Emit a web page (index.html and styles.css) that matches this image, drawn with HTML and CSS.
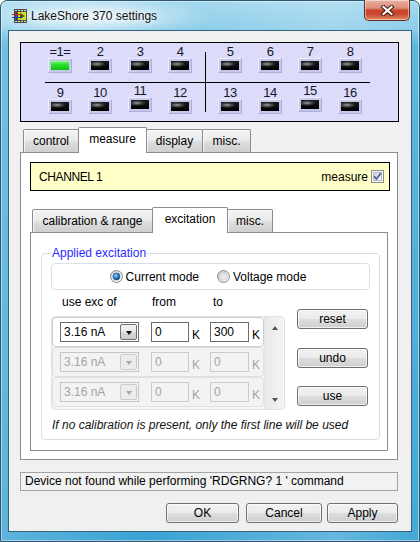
FILE: index.html
```html
<!DOCTYPE html>
<html>
<head>
<meta charset="utf-8">
<title>LakeShore 370 settings</title>
<link rel="stylesheet" href="styles.css">
</head>
<body>
<div class="window">
  <div class="titlebar">
    <svg class="appicon" width="16" height="16" viewBox="0 0 16 16">
      <rect x="2" y="1" width="13" height="14" fill="#4a4a4a"/>
      <rect x="3" y="2" width="2" height="1" fill="#d8d8d8"/><rect x="6" y="2" width="2" height="1" fill="#d8d8d8"/>
      <rect x="9" y="2" width="2" height="1" fill="#d8d8d8"/><rect x="12" y="2" width="2" height="1" fill="#d8d8d8"/>
      <rect x="3" y="13" width="2" height="1" fill="#d8d8d8"/><rect x="6" y="13" width="2" height="1" fill="#d8d8d8"/>
      <rect x="9" y="13" width="2" height="1" fill="#d8d8d8"/><rect x="12" y="13" width="2" height="1" fill="#d8d8d8"/>
      <rect x="6" y="4" width="8" height="8" fill="#d4e21c"/>
      <path d="M8 5 L13 8 L8 11 Z" fill="#3d5a0c"/>
      <rect x="0" y="6" width="10" height="1" fill="#e01818"/>
      <rect x="0" y="9" width="10" height="1" fill="#1c3ce0"/>
    </svg>
    <span class="title">LakeShore 370 settings</span>
    <div class="close">
      <svg width="15" height="11" viewBox="0 0 15 11">
        <path d="M3.5 2 L11.5 9 M11.5 2 L3.5 9" stroke="#4a1a12" stroke-width="4.2" stroke-linecap="square"/>
        <path d="M3.5 2 L11.5 9 M11.5 2 L3.5 9" stroke="#ffffff" stroke-width="2.2" stroke-linecap="square"/>
      </svg>
    </div>
  </div>

  <div class="client">
    <div class="chan">
      <div class="vline"></div>
      <div class="hline"></div>

      <div class="cell r1 k1"><span class="num">=1=</span><span class="led on"><i></i></span></div>
      <div class="cell r1 k2"><span class="num">2</span><span class="led"><i></i></span></div>
      <div class="cell r1 k3"><span class="num">3</span><span class="led"><i></i></span></div>
      <div class="cell r1 k4"><span class="num">4</span><span class="led"><i></i></span></div>
      <div class="cell r1 k5"><span class="num">5</span><span class="led"><i></i></span></div>
      <div class="cell r1 k6"><span class="num">6</span><span class="led"><i></i></span></div>
      <div class="cell r1 k7"><span class="num">7</span><span class="led"><i></i></span></div>
      <div class="cell r1 k8"><span class="num">8</span><span class="led"><i></i></span></div>

      <div class="cell r2 k1"><span class="num">9</span><span class="led"><i></i></span></div>
      <div class="cell r2 k2"><span class="num">10</span><span class="led"><i></i></span></div>
      <div class="cell r2 k3 up"><span class="num">11</span><span class="led"><i></i></span></div>
      <div class="cell r2 k4"><span class="num">12</span><span class="led"><i></i></span></div>
      <div class="cell r2 k5"><span class="num">13</span><span class="led"><i></i></span></div>
      <div class="cell r2 k6"><span class="num">14</span><span class="led"><i></i></span></div>
      <div class="cell r2 k7 up"><span class="num">15</span><span class="led"><i></i></span></div>
      <div class="cell r2 k8"><span class="num">16</span><span class="led"><i></i></span></div>
    </div>

    <div class="tabs">
      <div class="tabbar">
        <div class="tab w-control">control</div>
        <div class="tab sel w-measure">measure</div>
        <div class="tab w-display">display</div>
        <div class="tab w-misc">misc.</div>
      </div>
      <div class="panel">
        <div class="chbar">
          <span class="chname">CHANNEL 1</span>
          <span class="meas">measure</span>
          <svg class="check" width="13" height="13" viewBox="0 0 13 13">
            <defs>
              <linearGradient id="cbg" x1="0" y1="0" x2="1" y2="1">
                <stop offset="0" stop-color="#cfd3da"/>
                <stop offset="1" stop-color="#f7f7f9"/>
              </linearGradient>
            </defs>
            <rect x="0.5" y="0.5" width="12" height="12" fill="#f6f6f6" stroke="#8e8f8f"/>
            <rect x="2.5" y="2.5" width="8" height="8" fill="url(#cbg)" stroke="#b7bcc6"/>
            <path d="M3.2 6.4 L5.4 9 L9.8 3.2" fill="none" stroke="#4a5c96" stroke-width="1.7"/>
          </svg>
        </div>

        <div class="subtabs">
          <div class="tabbar sub">
            <div class="tab w-calib">calibration &amp; range</div>
            <div class="tab sel w-exc">excitation</div>
            <div class="tab w-misc2">misc.</div>
          </div>
          <div class="subpanel">
            <fieldset class="group">
              <legend>Applied excitation</legend>
              <div class="modes">
                <label class="radio">
                  <svg width="13" height="13" viewBox="0 0 13 13">
                    <defs>
                      <linearGradient id="rg1" x1="0" y1="0" x2="1" y2="1">
                        <stop offset="0" stop-color="#c9ccd2"/>
                        <stop offset="1" stop-color="#f6f6f6"/>
                      </linearGradient>
                      <radialGradient id="rb1" cx="0.4" cy="0.35" r="0.7">
                        <stop offset="0" stop-color="#a6e2ff"/>
                        <stop offset="0.45" stop-color="#2f8ad6"/>
                        <stop offset="1" stop-color="#0b3f7a"/>
                      </radialGradient>
                    </defs>
                    <circle cx="6.5" cy="6.5" r="6" fill="url(#rg1)" stroke="#8a8d93"/>
                    <circle cx="6.5" cy="6.5" r="3.4" fill="url(#rb1)" stroke="#19467a" stroke-width="0.6"/>
                  </svg>
                  <span>Current mode</span>
                </label>
                <label class="radio">
                  <svg width="13" height="13" viewBox="0 0 13 13">
                    <defs>
                      <linearGradient id="rg2" x1="0" y1="0" x2="1" y2="1">
                        <stop offset="0" stop-color="#c3c6cc"/>
                        <stop offset="1" stop-color="#f8f8f8"/>
                      </linearGradient>
                    </defs>
                    <circle cx="6.5" cy="6.5" r="6" fill="url(#rg2)" stroke="#8a8d93"/>
                    <circle cx="6.5" cy="6.5" r="3.6" fill="#e6e7ea" stroke="#c5c8ce" stroke-width="0.6"/>
                  </svg>
                  <span>Voltage mode</span>
                </label>
              </div>

              <div class="exc">
                <div class="exc-left">
                  <div class="heads">
                    <span class="h1">use exc of</span>
                    <span class="h2">from</span>
                    <span class="h3">to</span>
                  </div>
                  <div class="table">
                    <div class="rows">
                      <div class="row">
                        <div class="combo"><span class="ctext">3.16 nA</span><span class="cbtn"><i></i></span></div>
                        <div class="inp i1">0</div><span class="unit">K</span>
                        <div class="inp i2">300</div><span class="unit">K</span>
                      </div>
                      <div class="row dis">
                        <div class="combo"><span class="ctext">3.16 nA</span><span class="cbtn"><i></i></span></div>
                        <div class="inp i1">0</div><span class="unit">K</span>
                        <div class="inp i2">0</div><span class="unit">K</span>
                      </div>
                      <div class="row dis">
                        <div class="combo"><span class="ctext">3.16 nA</span><span class="cbtn"><i></i></span></div>
                        <div class="inp i1">0</div><span class="unit">K</span>
                        <div class="inp i2">0</div><span class="unit">K</span>
                      </div>
                    </div>
                    <div class="scroll"><span class="arr-up"></span><span class="arr-down"></span></div>
                  </div>
                </div>
                <div class="sidebtns">
                  <button class="btn">reset</button>
                  <button class="btn b-undo">undo</button>
                  <button class="btn b-use">use</button>
                </div>
              </div>
              <p class="note">If no calibration is present, only the first line will be used</p>
            </fieldset>
          </div>
        </div>
      </div>
    </div>

    <div class="status">Device not found while performing 'RDGRNG? 1 ' command</div>

    <div class="actions">
      <button class="btn b-ok">OK</button>
      <button class="btn b-cancel">Cancel</button>
      <button class="btn b-apply">Apply</button>
    </div>
  </div>
</div>
</body>
</html>
```

FILE: styles.css
```css
* { box-sizing: border-box; }
html, body { margin: 0; padding: 0; }
body {
  width: 420px;
  height: 542px;
  overflow: hidden;
  background: #ffffff;
  font-family: "Liberation Sans", Arial, sans-serif;
  font-size: 12px;
  color: #000;
}

/* ---------- window frame ---------- */
.window {
  width: 420px;
  height: 542px;
  display: flex;
  flex-direction: column;
  padding: 0 7px 9px 7px;
  border: 1px solid #2d5670;
  border-radius: 7px 7px 0 0;
  background:
    radial-gradient(ellipse 120px 22px at 92px 16px, rgba(255,255,255,0.85), rgba(255,255,255,0)),
    linear-gradient(90deg, rgba(255,255,255,0.18), rgba(255,255,255,0) 35%, rgba(255,255,255,0.22) 80%, rgba(255,255,255,0.05)),
    linear-gradient(180deg, #9fd6ee 0, #86cbe8 28px, #52b3dc 44px, #3aa3d4 100%);
  box-shadow: inset 0 0 0 1px rgba(255,255,255,0.45);
}
.titlebar {
  flex: none;
  height: 29px;
  display: flex;
  align-items: flex-start;
}
.appicon { margin: 7px 0 0 4px; flex: none; }
.title {
  margin: 7px 0 0 3px;
  line-height: 16px;
  font-size: 12px;
  color: #111;
  text-shadow: 0 0 6px #fff, 0 0 10px #fff;
}
.close {
  margin: -1px 2px 0 auto;
  width: 46px;
  height: 21px;
  border: 1px solid #6a2a20;
  border-top: 0;
  border-radius: 0 0 5px 5px;
  background: linear-gradient(180deg, #eab1a3 0, #dd8d7a 40%, #c5452d 52%, #c9472e 70%, #e08a66 100%);
  box-shadow: inset 0 0 0 1px rgba(255,255,255,0.45);
  display: flex;
  align-items: center;
  justify-content: center;
}

.client {
  flex: 1;
  background: #f0f0f0;
  border: 1px solid #34627c;
  padding: 11px 0 0 11px;
  display: flex;
  flex-direction: column;
}

/* ---------- channel panel ---------- */
.chan {
  flex: none;
  width: 379px;
  height: 80px;
  border: 1px solid #000;
  background: #dcdcfa;
  padding-top: 2px;
  display: grid;
  grid-template-columns: 19px repeat(4, 40px) 5px 1px 4px repeat(4, 40px) 1fr;
  grid-template-rows: 28px 9px 1px 3px 28px;
}
.vline { grid-column: 7; grid-row: 1 / 6; background: #000; margin: 7px 0 2px 0; }
.hline { grid-column: 2 / 13; grid-row: 3; background: #000; margin-left: 5px; }
.cell { display: flex; flex-direction: column; align-items: center; }
.r1 { grid-row: 1; }
.r2 { grid-row: 5; }
.k1 { grid-column: 2; } .k2 { grid-column: 3; } .k3 { grid-column: 4; } .k4 { grid-column: 5; }
.k5 { grid-column: 9; } .k6 { grid-column: 10; } .k7 { grid-column: 11; } .k8 { grid-column: 12; }
.up { margin-top: -2px; }
.num {
  height: 13px;
  line-height: 13px;
  font-size: 13px;
  letter-spacing: -0.5px;
  color: #161628;
}
.led {
  display: block;
  width: 24px;
  height: 15px;
  padding: 2px 2px;
  background: #c8c8ee;
  border: 1px solid;
  border-color: #ececff #aeaed8 #aeaed8 #ececff;
}
.led i {
  display: block;
  width: 100%;
  height: 100%;
  background: radial-gradient(ellipse 9px 3px at 6px 3px, #a0a0a0 0, #3a3a3a 60%, rgba(0,0,0,0) 100%), linear-gradient(#1a1a1a, #000);
}
.led.on i {
  background: linear-gradient(180deg, #8cff8c 0, #2ee02e 35%, #10c010 100%);
}

/* ---------- tabs ---------- */
.tabs { flex: none; width: 378px; margin-top: 5px; display: flex; flex-direction: column; }
.tabbar { display: flex; align-items: flex-end; height: 25px; padding-left: 3px; }
.tabbar.sub { padding-left: 2px; }
.tab {
  height: 23px;
  padding-top: 4px;
  line-height: 14px;
  text-align: center;
  white-space: nowrap;
  border: 1px solid #898c95;
  border-bottom: 0;
  border-radius: 2px 2px 0 0;
  background: linear-gradient(180deg, #f3f3f3 0, #ebebeb 45%, #dddddd 55%, #cfcfcf 100%);
  box-shadow: inset 1px 1px 0 rgba(255,255,255,0.7);
}
.tab + .tab { margin-left: -1px; }
.tab.sel {
  height: 26px;
  margin-bottom: -1px;
  background: #fff;
  box-shadow: none;
  position: relative;
  z-index: 1;
}
.w-control { width: 56px; }
.w-measure { width: 69px; }
.w-display { width: 57px; }
.w-misc { width: 49px; }
.w-calib { width: 121px; }
.w-exc { width: 76px; }
.w-misc2 { width: 46px; }

.panel {
  border: 1px solid #898c95;
  background: #fff;
  padding: 9px 9px 8px 9px;
}
.chbar {
  width: 360px;
  height: 29px;
  border: 1px solid #000;
  background: #ffffc8;
  display: flex;
  align-items: center;
  padding: 0 5px 0 8px;
  font-size: 12px;
}
.chname { flex: 1; letter-spacing: -0.4px; }
.meas { margin-right: 3px; }
.check { flex: none; margin-top: -1px; }

.subtabs { margin-top: 16px; width: 358px; }
.subpanel {
  border: 1px solid #898c95;
  background: #fff;
  padding: 13px 0 10px 10px;
}

/* ---------- group box ---------- */
.group {
  margin: 0;
  width: 339px;
  min-width: 0;
  border: 1px solid #d5dfe5;
  border-radius: 4px;
  padding: 3px 9px 7px 9px;
}
.group legend {
  padding: 0 1px;
  line-height: 14px;
  font-size: 12px;
  color: #2a2aff;
}
.modes {
  height: 27px;
  border: 1px solid #d5dfe5;
  border-radius: 4px;
  display: flex;
  align-items: center;
  justify-content: center;
  padding-right: 5px;
  gap: 18px;
}
.radio { display: flex; align-items: center; gap: 3px; }
.radio svg { flex: none; }

.exc { display: flex; }
.exc-left { width: 234px; }
.heads { margin-top: 5px; display: flex; padding-left: 11px; line-height: 14px; }
.h1 { width: 90px; }
.h2 { width: 61px; }

.table {
  margin-top: 7px;
  width: 234px;
  height: 94px;
  border: 1px solid #e2e2e2;
  border-radius: 4px;
  display: flex;
  background: #f6f6f6;
}
.rows { flex: 1; display: flex; flex-direction: column; }
.row {
  height: 30px;
  border: 1px solid #cdcdcd;
  border-radius: 4px;
  background: #fff;
  display: flex;
  align-items: center;
  padding-left: 7px;
}
.row.dis { background: #f3f3f3; border-color: #e0e0e0; color: #a3a3a3; }
.combo {
  width: 79px;
  height: 20px;
  border: 1px solid #6c6c6c;
  background: #fff;
  display: flex;
  align-items: flex-start;
  padding: 1px 1px 0 3px;
}
.ctext { flex: 1; line-height: 17px; }
.cbtn {
  width: 17px;
  height: 16px;
  border: 1px solid #707070;
  border-radius: 2px;
  background: linear-gradient(180deg, #f4f4f4 0, #e8e8e8 50%, #d9d9d9 51%, #cdcdcd 100%);
  display: flex;
  align-items: center;
  justify-content: center;
}
.cbtn i {
  width: 0;
  height: 0;
  border-left: 3.5px solid transparent;
  border-right: 3.5px solid transparent;
  border-top: 4px solid #111;
  margin-top: 1px;
}
.row.dis .combo { border-color: #c6c6c6; background: #f3f3f3; }
.row.dis .cbtn { border-color: #cacaca; background: #ececec; }
.row.dis .cbtn i { border-top-color: #a8a8a8; }
.inp {
  height: 20px;
  border: 1px solid #6c6c6c;
  background: #fff;
  padding-left: 3px;
  line-height: 18px;
}
.i1 { width: 38px; margin-left: 12px; }
.i2 { width: 39px; margin-left: 9px; }
.row.dis .inp { border-color: #cbcbcb; background: #f3f3f3; }
.unit { width: 9px; margin: 6px 0 0 3px; line-height: 14px; }

.scroll {
  width: 20px;
  display: flex;
  flex-direction: column;
  justify-content: space-between;
  align-items: center;
  padding: 9px 0 7px 0;
  background: linear-gradient(90deg, #e9e9e9, #f5f5f5);
  border-left: 1px solid #e4e4e4;
  border-radius: 0 4px 4px 0;
}
.arr-up {
  width: 0; height: 0;
  border-left: 3.5px solid transparent;
  border-right: 3.5px solid transparent;
  border-bottom: 4px solid #555;
}
.arr-down {
  width: 0; height: 0;
  border-left: 3.5px solid transparent;
  border-right: 3.5px solid transparent;
  border-top: 4px solid #555;
}

.sidebtns {
  margin-left: 12px;
  width: 71px;
  display: flex;
  flex-direction: column;
  padding-top: 19px;
}
.b-undo { margin-top: 19px; }
.b-use { margin-top: 18px; }

.btn {
  display: flex;
  align-items: center;
  justify-content: center;
  height: 20px;
  padding: 0;
  margin-left: 0;
  margin-right: 0;
  border: 1px solid #707070;
  border-radius: 3px;
  background: linear-gradient(180deg, #f2f2f2 0, #ebebeb 48%, #dddddd 52%, #cfcfcf 100%);
  box-shadow: inset 0 0 0 1px rgba(255,255,255,0.65);
  font-family: inherit;
  font-size: 12px;
  color: #000;
}

.note {
  margin: 8px 0 0 1px;
  font-style: italic;
  line-height: 14px;
  color: #111;
}

/* ---------- bottom ---------- */
.status {
  flex: none;
  margin-top: 12px;
  width: 378px;
  height: 19px;
  border: 1px solid #a3a3a3;
  background: #f2f2f2;
  padding-left: 4px;
  line-height: 17px;
  white-space: nowrap;
}
.actions {
  flex: none;
  margin-top: 12px;
  width: 378px;
  display: flex;
  justify-content: flex-end;
}
.b-ok { width: 73px; margin-right: 7px; }
.b-cancel { width: 76px; margin-right: 5px; }
.b-apply { width: 71px; }
```
